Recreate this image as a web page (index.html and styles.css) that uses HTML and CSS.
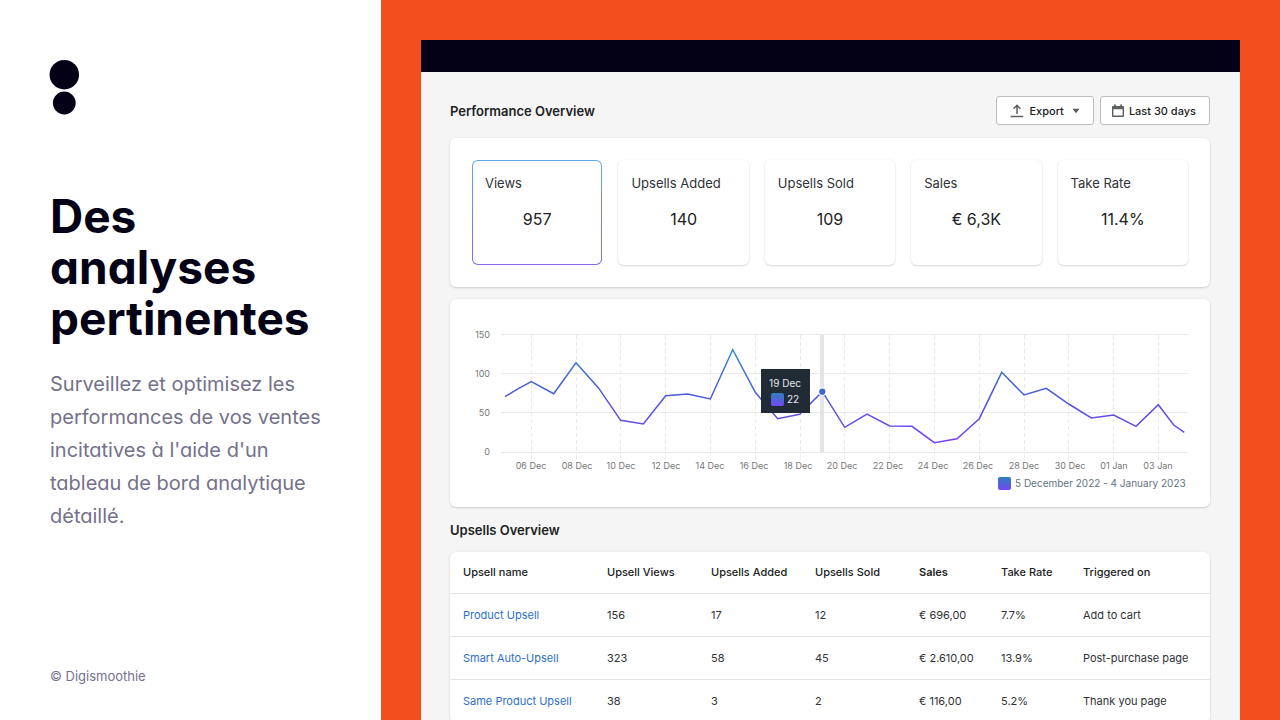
FILE: index.html
```html
<!DOCTYPE html>
<html lang="fr">
<head>
<meta charset="utf-8">
<meta name="viewport" content="width=device-width, initial-scale=1">
<title>Des analyses pertinentes</title>
<link rel="stylesheet" href="styles.css">
</head>
<body>
<div class="slide">
  <section class="intro">
    <svg class="logo" viewBox="0 0 30 55" aria-hidden="true"><circle cx="14.300" cy="14.700" r="14.700"/><circle cx="14.300" cy="43" r="11.400"/></svg>
    <h1 class="title">Des analyses pertinentes</h1>
    <p class="lead">Surveillez et optimisez les performances de vos ventes incitatives à l'aide d'un tableau de bord analytique détaillé.</p>
    <p class="copyright">© Digismoothie</p>
  </section>
  <main class="stage">
    <div class="window">
      <div class="topbar"></div>
      <div class="content">
        <header class="page-head">
          <h2 class="heading">Performance Overview</h2>
          <div class="actions">
            <button class="btn btn-export" type="button">
              <svg class="icon" width="14" height="14" viewBox="0 0 14 14" fill="none" stroke="#5c5f62" stroke-width="1.500"><path d="M7 10V1.500M3.600 4.700L7 1.300l3.400 3.400M.7 12.600h12.600"/></svg>
              Export
              <svg class="caret" width="8" height="6" viewBox="0 0 8 6"><path d="M.4.800h7.200L4 5.200z" fill="#5c5f62"/></svg>
            </button>
            <button class="btn" type="button">
              <svg class="icon" width="12" height="14" viewBox="0 0 12 14"><path fill="#5c5f62" fill-rule="evenodd" d="M2 .500h1.800v1.500h4.400V.500H10V2h.8c.7 0 1.200.5 1.200 1.200v8.500c0 .7-.5 1.300-1.200 1.300H1.200C.5 13 0 12.400 0 11.700V3.200C0 2.500.5 2 1.200 2H2zM1.400 5.300v6.300h9.200V5.300z"/></svg>
              Last 30 days
            </button>
          </div>
        </header>

        <section class="card metrics">
          <article class="metric metric-active"><h3>Views</h3><p>957</p></article>
          <article class="metric"><h3>Upsells Added</h3><p>140</p></article>
          <article class="metric"><h3>Upsells Sold</h3><p>109</p></article>
          <article class="metric"><h3>Sales</h3><p>€ 6,3K</p></article>
          <article class="metric"><h3>Take Rate</h3><p>11.4%</p></article>
        </section>

        <section class="card">
          <svg class="chart" viewBox="0 0 760 208" role="img" aria-label="Upsell views by day">
            <defs>
              <linearGradient id="line" gradientUnits="userSpaceOnUse" x1="0" y1="50" x2="0" y2="144"><stop offset="0" stop-color="#368bd6"/><stop offset=".45" stop-color="#4a5bd8"/><stop offset="1" stop-color="#7a3ff8"/></linearGradient>
              <linearGradient id="swatch" x1="0" y1="0" x2="0" y2="1"><stop offset="0" stop-color="#2c80bd"/><stop offset="1" stop-color="#7747f5"/></linearGradient>
            </defs>
            <path class="grid" d="M51 35.500H738M51 74.500H738M51 113.500H738M51 153.500H738"/>
            <path class="grid dashed" d="M81.500 36V153M126.500 36V153M170.500 36V153M215.500 36V153M260.500 36V153M305.500 36V153M350.500 36V153M394.500 36V153M439.500 36V153M484.500 36V153M529.500 36V153M574.500 36V153M618.500 36V153M663.500 36V153M708.500 36V153"/>
            <path class="grid ticks" d="M81.500 153v8M126.500 153v8M170.500 153v8M215.500 153v8M260.500 153v8M305.500 153v8M350.500 153v8M394.500 153v8M439.500 153v8M484.500 153v8M529.500 153v8M574.500 153v8M618.500 153v8M663.500 153v8M708.500 153v8"/>
            <rect x="370" y="36" width="4" height="117" fill="#e4e4e4"/>
            <polyline class="series" points="55,97.700 68.300,89.700 81.300,82.700 103.700,94.700 126,63.700 148.300,88.700 170.700,121.300 193.300,125 215.700,96.700 237.700,95 260.300,100 282.700,50.700 305.300,93.300 327.700,119.700 349.700,115.300 372.300,92.700 394.700,128.300 417,115 439.700,127 462,127.300 484.300,143.700 507,139.700 529.300,119.700 551.700,73.300 574,96 596.300,89.300 618.700,105 641.300,119 663.700,116 686,127.300 708.300,105.700 723.700,126 734.300,133.300"/>
            <circle cx="372.300" cy="92.700" r="3.700" fill="#4464cf" stroke="#fff" stroke-width="1.200"/>
            <g class="axis axis-y"><text x="40" y="39">150</text><text x="40" y="78">100</text><text x="40" y="117">50</text><text x="40" y="156">0</text></g>
            <g class="axis"><text x="81" y="170">06 Dec</text><text x="127" y="170">08 Dec</text><text x="171" y="170">10 Dec</text><text x="216" y="170">12 Dec</text><text x="260" y="170">14 Dec</text><text x="304" y="170">16 Dec</text><text x="348" y="170">18 Dec</text><text x="392" y="170">20 Dec</text><text x="438" y="170">22 Dec</text><text x="483" y="170">24 Dec</text><text x="528" y="170">26 Dec</text><text x="574" y="170">28 Dec</text><text x="620" y="170">30 Dec</text><text x="664" y="170">01 Jan</text><text x="708" y="170">03 Jan</text></g>
            <rect x="548" y="178" width="13" height="13" rx="2" fill="url(#swatch)"/>
            <text class="legend" x="565" y="188">5 December 2022 - 4 January 2023</text>
            <g class="tip"><rect x="311" y="70" width="49" height="44" fill="#212b36"/><text x="335" y="88">19 Dec</text><rect x="321" y="94" width="13" height="13" rx="2" fill="url(#swatch)"/><text x="343" y="104">22</text></g>
          </svg>
        </section>

        <h2 class="heading table-heading">Upsells Overview</h2>
        <section class="card">
          <table class="upsells">
            <colgroup><col class="c-name"><col class="c-count"><col class="c-count"><col class="c-count"><col class="c-money"><col class="c-money"><col class="c-trigger"></colgroup>
            <thead><tr><th>Upsell name</th><th>Upsell Views</th><th>Upsells Added</th><th>Upsells Sold</th><th class="sorted">Sales</th><th>Take Rate</th><th>Triggered on</th></tr></thead>
            <tbody>
              <tr><td><a href="#">Product Upsell</a></td><td>156</td><td>17</td><td>12</td><td>€ 696,00</td><td>7.7%</td><td>Add to cart</td></tr>
              <tr><td><a href="#">Smart Auto-Upsell</a></td><td>323</td><td>58</td><td>45</td><td>€ 2.610,00</td><td>13.9%</td><td>Post-purchase page</td></tr>
              <tr><td><a href="#">Same Product Upsell</a></td><td>38</td><td>3</td><td>2</td><td>€ 116,00</td><td>5.2%</td><td>Thank you page</td></tr>
            </tbody>
          </table>
        </section>
      </div>
    </div>
  </main>
</div>
</body>
</html>
```
FILE: styles.css
```css
* { box-sizing: border-box; }
body, h1, h2, h3, p { margin: 0; }
body { font-family: Inter, "Liberation Sans", sans-serif; color: #303236; background: #fff; }
.slide { display: grid; grid-template-columns: 381px minmax(0, 1fr); height: 100vh; overflow: hidden; }

.intro { display: flex; flex-direction: column; padding: 60px 48px 34px 50px; font-feature-settings: "cv11"; }
.logo { width: 30px; height: 55px; fill: #040015; overflow: visible; }
.title { margin-top: 76px; font-size: 46px; line-height: 51px; font-weight: 700; color: #040015; }
.lead { margin-top: 24px; font-size: 20px; line-height: 33px; color: #74718c; }
.copyright { margin-top: auto; font-size: 13px; line-height: 20px; color: #74718c; }

.stage { padding: 40px 40px 0; background: #f24e1e; overflow: hidden; }
.window { min-height: 100%; background: #f5f5f5; }
.topbar { height: 32px; background: #040015; }
.content { padding: 24px 30px 0 29px; }
.page-head { display: flex; justify-content: space-between; align-items: center; margin-bottom: 13px; }
.heading { font-size: 13px; line-height: 20px; font-weight: 600; color: #202223; }
.actions { display: flex; gap: 6px; }
.btn { display: flex; align-items: center; gap: 5px; height: 29px; padding: 0 13px 0 11px; border: 1px solid #babec3; border-radius: 3px; background: #fff; font: 500 11px/16px Inter, "Liberation Sans", sans-serif; color: #202223; white-space: nowrap; }
.btn-export { padding: 0 13px; }
.caret { margin-left: 3px; }
.icon, .caret { flex: none; }

.card { margin-bottom: 12px; background: #fff; border-radius: 6px; box-shadow: 0 0 3px rgba(23, 24, 24, .06), 0 1px 2px rgba(0, 0, 0, .14); overflow: hidden; }
.metrics { display: grid; grid-template-columns: repeat(5, minmax(0, 1fr)); gap: 16px; padding: 22px; }
.metric { height: 105px; padding: 12px; border: 1px solid transparent; border-radius: 6px; background: #fff; box-shadow: 0 0 3px rgba(23, 24, 24, .06), 0 1px 2px rgba(0, 0, 0, .14); }
.metric-active { background: linear-gradient(#fff, #fff) padding-box, linear-gradient(#60a5ec, #8a68f2) border-box; box-shadow: none; }
.metric h3 { font-size: 13px; line-height: 20px; font-weight: 400; }
.metric p { margin-top: 14px; font-size: 16px; line-height: 24px; text-align: center; color: #202223; }

.chart { display: block; width: 100%; height: auto; }
.grid { fill: none; stroke: #e9e9e9; }
.dashed { stroke-dasharray: 4 3; }
.ticks { stroke: #f0f0f0; }
.series { fill: none; stroke: url(#line); stroke-width: 1.5; }
.axis { font-size: 9px; fill: #777; text-anchor: middle; }
.axis-y { text-anchor: end; }
.legend { font-size: 10px; fill: #637381; }
.tip { font-size: 10px; fill: #e6e9ec; text-anchor: middle; }

.table-heading { margin: 13px 0 12px; }
.upsells { width: 100%; table-layout: fixed; border-collapse: collapse; font-size: 11px; line-height: 16px; }
.c-name { width: 144px; }
.c-count { width: 104px; }
.c-money { width: 82px; }
.c-trigger { width: 140px; }
.upsells th, .upsells td { height: 43px; padding: 0 0 0 13px; text-align: left; white-space: nowrap; border-bottom: 1px solid #e4e5e7; }
.upsells th { height: 41px; font-weight: 500; color: #202223; }
.upsells .sorted { font-weight: 600; }
.upsells a { color: #2c6ecb; text-decoration: none; }
```
